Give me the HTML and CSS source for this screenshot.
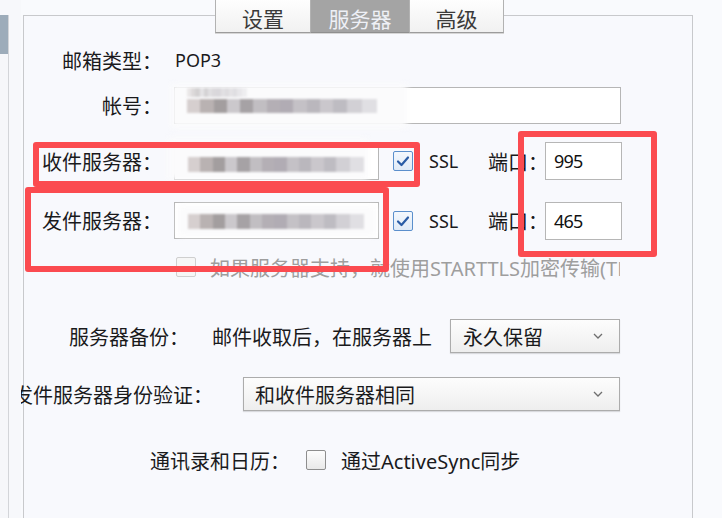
FILE: index.html
```html
<!DOCTYPE html>
<html lang="zh-CN">
<head>
<meta charset="utf-8">
<title>服务器设置</title>
<link rel="stylesheet" href="styles.css">
</head>
<body>
<div class="page">
  <div class="sidebar"><div class="sidebar-tab"></div></div>
  <div class="main">
    <div class="panel">
      <div class="tabs">
        <div class="tab t1">设置</div>
        <div class="tab t2 active">服务器</div>
        <div class="tab t3">高级</div>
      </div>

      <div class="row r1">
        <span class="label">邮箱类型：</span>
        <span class="value">POP3</span>
      </div>

      <div class="row r2">
        <span class="label">帐号：</span>
        <div class="input account">
          <div class="glow g-account"></div>
          <div class="mosaic m-account"></div>
          <div class="mosaic m-account-top"></div>
        </div>
      </div>

      <div class="row r3">
        <span class="label">收件服务器：</span>
        <div class="input server in-recv">
          <div class="glow g-recv"></div>
          <div class="mosaic m-server"></div>
        </div>
        <span class="check checked"><svg viewBox="0 0 20 20" width="20" height="20"><polyline points="5,10.5 8.5,14 15,6.5" fill="none" stroke="#2a5ca6" stroke-width="2.2" stroke-linecap="round" stroke-linejoin="round"/></svg></span>
        <span class="ssl">SSL</span>
        <span class="port-label">端口：</span>
        <div class="input port">995</div>
      </div>

      <div class="row r4">
        <span class="label">发件服务器：</span>
        <div class="input server">
          <div class="glow g-send"></div>
          <div class="mosaic m-server"></div>
        </div>
        <span class="check checked"><svg viewBox="0 0 20 20" width="20" height="20"><polyline points="5,10.5 8.5,14 15,6.5" fill="none" stroke="#2a5ca6" stroke-width="2.2" stroke-linecap="round" stroke-linejoin="round"/></svg></span>
        <span class="ssl">SSL</span>
        <span class="port-label">端口：</span>
        <div class="input port">465</div>
      </div>

      <div class="row r5">
        <span class="check disabled"></span>
        <span class="starttls">如果服务器支持，就使用STARTTLS加密传输(TLS)</span>
      </div>

      <div class="row r6">
        <span class="label-free">服务器备份：</span>
        <span class="desc">邮件收取后，在服务器上</span>
        <div class="select sel-keep">
          <span>永久保留</span>
          <svg class="chev" viewBox="0 0 10 6" width="10" height="6"><polyline points="1,1 5,5 9,1" fill="none" stroke="#6e6e6e" stroke-width="1.3"/></svg>
        </div>
      </div>

      <div class="row r7">
        <span class="label-free">发件服务器身份验证：</span>
        <div class="select sel-auth">
          <span>和收件服务器相同</span>
          <svg class="chev" viewBox="0 0 10 6" width="10" height="6"><polyline points="1,1 5,5 9,1" fill="none" stroke="#6e6e6e" stroke-width="1.3"/></svg>
        </div>
      </div>

      <div class="row r8">
        <span class="label-free">通讯录和日历：</span>
        <span class="check"></span>
        <span class="sync">通过ActiveSync同步</span>
      </div>

      <div class="mark mark-recv"></div>
      <div class="mark mark-send"></div>
      <div class="mark mark-port"></div>
    </div>
  </div>
</div>
</body>
</html>
```

FILE: styles.css
```css
html, body {
  margin: 0;
  padding: 0;
}
body {
  width: 722px;
  height: 518px;
  overflow: hidden;
  background: #f7f8fb;
  font-family: "Noto Sans", "Noto Sans CJK SC", sans-serif;
  color: #1a1a1c;
  font-size: 20px;
}
.page {
  display: flex;
  height: 518px;
}
.sidebar {
  flex: none;
  width: 8px;
  margin-top: 15px;
  border-right: 1px solid #d3d5d9;
  background: #f6f7fa;
}
.sidebar-tab {
  height: 39px;
  background: #9dacba;
}
.main {
  flex: none;
  width: 701px;
  margin-left: 12px;
  overflow: hidden;
  background: #f9fafd;
}
.panel {
  position: relative;
  box-sizing: border-box;
  width: 670px;
  height: 540px;
  margin: 15px 0 0 2px;
  border: 1px solid #c8c9cc;
  background: #f8f9fd;
}

/* tabs */
.tabs {
  display: flex;
  margin: -20px 0 0 191px;
}
.tab {
  box-sizing: border-box;
  height: 37px;
  padding-top: 9px;
  line-height: 26px;
  font-size: 21px;
  text-align: center;
  color: #3a3a3a;
  border: 1px solid #b2b2b2;
  border-bottom-color: #9c9c9c;
  background: linear-gradient(#ffffff, #f1f1f1);
  box-shadow: 0 1px 0 #d6d6d6;
}
.t1 { width: 96px; }
.t2 { width: 98px; border-left: none; border-right: none; }
.t3 { width: 95px; }
.tab.active {
  background: #a4a4a4;
  border-color: #8f8f8f;
  color: #eef0f6;
}

/* rows */
.row {
  display: flex;
  align-items: center;
  white-space: nowrap;
}
.label {
  flex: none;
  width: 138px;
  text-align: right;
}
.r1 { margin-top: 12px; height: 30px; }
.r2 { margin-top: 12px; height: 37px; }
.r3 { margin-top: 18px; height: 38px; }
.r4 { margin-top: 22px; height: 37px; }
.r5 { margin-top: 18px; height: 20px; padding-left: 152px; }
.r6 { margin-top: 42px; height: 34px; padding-left: 45px; }
.r7 { margin-top: 24px; height: 34px; }
.r8 { margin-top: 38px; height: 22px; padding-left: 126px; }

.value {
  margin-left: 13px;
  font-size: 18px;
}

.input {
  position: relative;
  flex: none;
  box-sizing: border-box;
  border: 1px solid #b6b6b6;
  background: #ffffff;
}
.account {
  margin-left: 12px;
  width: 447px;
  height: 37px;
}
.server {
  margin-left: 12px;
  width: 205px;
  height: 37px;
}
.in-recv {
  height: 35px;
  margin-top: 2px;
}
.port {
  margin-left: -3px;
  width: 77px;
  height: 38px;
  padding-left: 8px;
  line-height: 36px;
  font-size: 18px;
  letter-spacing: -0.8px;
  color: #111;
}

/* redaction blur */
.glow {
  position: absolute;
  background: #fbfbfc;
  filter: blur(3px);
}
.g-account { left: -4px; top: -4px; width: 236px; height: 44px; }
.g-recv { left: -7px; top: -8px; width: 200px; height: 42px; }
.g-send { left: 3px; top: 3px; width: 198px; height: 30px; }
.mosaic {
  position: absolute;
  filter: blur(1.2px);
  background: linear-gradient(90deg,
    #d6cfcf 0 7%, #b9b2b2 7% 14%, #a39e9f 14% 21%, #cbc8cc 21% 28%,
    #a6a2a5 28% 35%, #c1bec2 35% 42%, #b4afb5 42% 49%, #b1acb4 49% 56%,
    #c4c1c6 56% 63%, #bab7bd 63% 70%, #cac7cc 70% 77%, #bebcc2 77% 84%,
    #d2d0d5 84% 92%, #e0dfe3 92% 100%);
}
.m-account { left: 12px; top: 11px; width: 190px; height: 14px; }
.m-account-top {
  left: 12px; top: 0; width: 60px; height: 9px;
  opacity: 0.45;
}
.m-server { left: 13px; top: 11px; width: 176px; height: 15px; }

/* checkboxes */
.check {
  flex: none;
  box-sizing: border-box;
  width: 20px;
  height: 20px;
  border: 1px solid #8e8e8e;
  border-radius: 2px;
  background: linear-gradient(#fdfdfd, #e9e9e9);
}
.check svg { display: block; margin: -1px; }
.check.checked {
  margin-left: 14px;
  border-color: #5b8fcc;
  background: linear-gradient(#f4f8fd, #dfeaf7);
}
.check.disabled {
  border-color: #cfcfcf;
  background: #f6f6f6;
}
.ssl {
  flex: none;
  width: 59px;
  margin-left: 16px;
  font-size: 18px;
}
.port-label {
  flex: none;
  width: 60px;
}

.starttls {
  margin-left: 14px;
  width: 410px;
  overflow: hidden;
  color: #9e9e9e;
}

.label-free { flex: none; }
.desc { margin-left: 23px; }
.r7 .label-free { margin-left: -11px; }
.r8 .check { margin-left: 16px; }
.sync { margin-left: 15px; }

/* selects */
.select {
  position: relative;
  flex: none;
  box-sizing: border-box;
  height: 34px;
  display: flex;
  align-items: center;
  justify-content: space-between;
  padding: 0 16px 0 12px;
  border: 1px solid #acacac;
  background: linear-gradient(#fdfdfd, #eeeeee);
  box-shadow: 0 1px 1px rgba(0, 0, 0, 0.12);
}
.sel-keep { margin-left: 18px; width: 170px; }
.sel-auth { margin-left: 30px; width: 377px; padding-left: 11px; }
.chev { flex: none; }

/* red annotation boxes */
.mark {
  position: absolute;
  box-sizing: border-box;
  border: 6px solid #fb4b50;
  border-radius: 3px;
}
.mark-recv { left: 9px; top: 126px; width: 387px; height: 45px; }
.mark-send { left: 1px; top: 171px; width: 364px; height: 85px; }
.mark-port { left: 494px; top: 115px; width: 139px; height: 126px; }
```
